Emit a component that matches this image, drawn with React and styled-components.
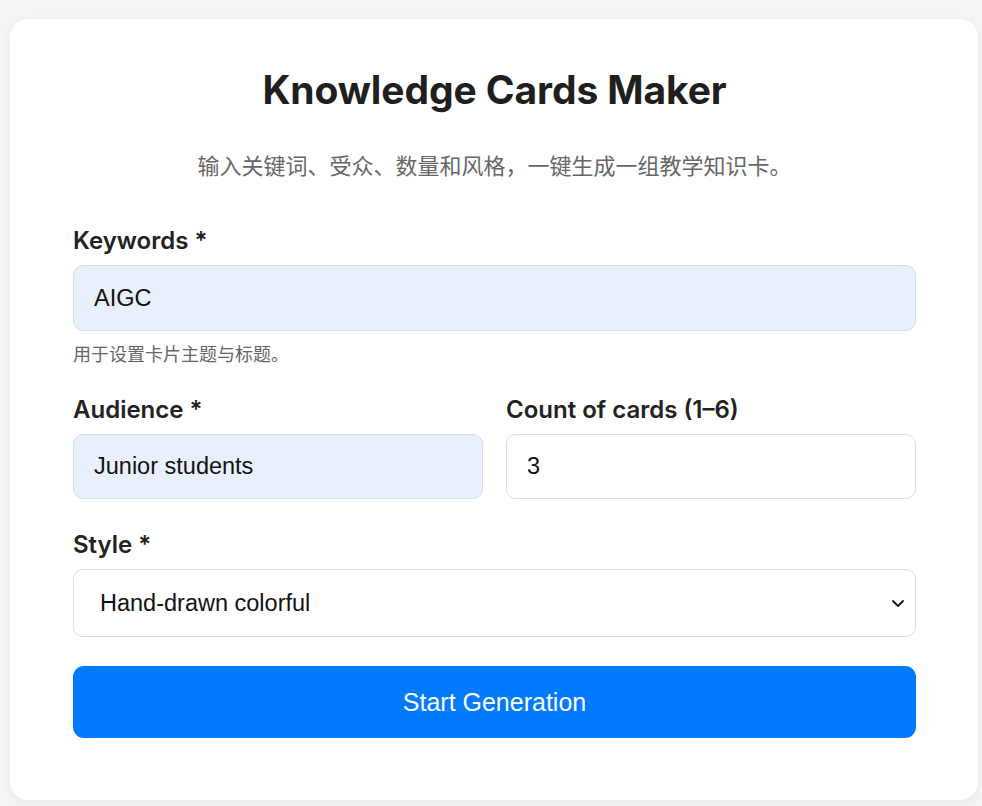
import React, { useState } from 'react';
import styled, { createGlobalStyle } from 'styled-components';

const GlobalStyle = createGlobalStyle`
  html, body {
    margin: 0;
    padding: 0;
    background: #f3f4f6;
  }
  * {
    box-sizing: border-box;
  }
`;

const Page = styled.div`
  min-height: 806px;
  padding: 19px 4px 6px 10px;
`;

const Card = styled.div`
  background: #fff;
  border-radius: 18px;
  box-shadow: 0 2px 10px rgba(0, 0, 0, 0.05);
  padding: 48px 62px 62px 63px;
  font-family: Inter, "Noto Sans CJK SC", sans-serif;
  color: #222;
`;

const Title = styled.h1`
  margin: 0;
  text-align: center;
  font-size: 39px;
  line-height: 46px;
  font-weight: 700;
  color: #1f1f1f;
  letter-spacing: -0.1px;
`;

const Subtitle = styled.p`
  margin: 37px 0 49px;
  text-align: center;
  font-size: 22px;
  line-height: 28px;
  color: #666;
  font-family: "Noto Sans CJK SC", sans-serif;
`;

const Form = styled.form`
  display: flex;
  flex-direction: column;
  gap: 32px;
`;

const Row = styled.div`
  display: grid;
  grid-template-columns: 1fr 1fr;
  gap: 23px;
`;

const Field = styled.div`
  display: flex;
  flex-direction: column;
`;

const Label = styled.label`
  font-size: 24px;
  line-height: 28px;
  font-weight: 600;
  color: #222;
  margin-bottom: 10px;
`;

const Input = styled.input`
  width: 100%;
  height: ${(p) => p.$h || 66}px;
  padding: 0 20px;
  border-radius: 10px;
  border: 1px solid ${(p) => (p.$filled ? '#d6dde8' : '#dcdcdc')};
  background: ${(p) => (p.$filled ? '#e8f0fe' : '#fff')};
  font-family: "Liberation Sans", Arial, sans-serif;
  font-size: 23.5px;
  color: #111;
  outline: none;
`;

const Help = styled.div`
  margin-top: 11px;
  font-size: 18px;
  line-height: 22px;
  color: #666;
  font-family: "Noto Sans CJK SC", sans-serif;
`;

const SelectWrap = styled.div`
  position: relative;
`;

const Select = styled.select`
  width: 100%;
  height: 68px;
  padding: 0 48px 0 26px;
  border-radius: 10px;
  border: 1px solid #dcdcdc;
  background: #fff;
  font-family: "Liberation Sans", Arial, sans-serif;
  font-size: 23.5px;
  color: #111;
  appearance: none;
  outline: none;
`;

const Chevron = styled.svg`
  position: absolute;
  right: 6px;
  top: 50%;
  transform: translateY(-50%);
  pointer-events: none;
`;

const Button = styled.button`
  margin-top: -3px;
  width: 100%;
  height: 72px;
  border: none;
  border-radius: 11px;
  background: #007bff;
  color: #fff;
  font-family: "Liberation Sans", Arial, sans-serif;
  font-size: 25px;
  cursor: pointer;
`;

export default function App() {
  const [keywords, setKeywords] = useState('AIGC');
  const [audience, setAudience] = useState('Junior students');
  const [count, setCount] = useState('3');
  const [style, setStyle] = useState('hand-drawn');

  return (
    <>
      <GlobalStyle />
      <Page>
        <Card>
          <Title>Knowledge Cards Maker</Title>
          <Subtitle>输入关键词、受众、数量和风格，一键生成一组教学知识卡。</Subtitle>
          <Form onSubmit={(e) => e.preventDefault()}>
            <Field>
              <Label>Keywords *</Label>
              <Input $filled value={keywords} onChange={(e) => setKeywords(e.target.value)} />
              <Help>用于设置卡片主题与标题。</Help>
            </Field>
            <Row>
              <Field>
                <Label>Audience *</Label>
                <Input $filled $h={65} value={audience} onChange={(e) => setAudience(e.target.value)} />
              </Field>
              <Field>
                <Label>Count of cards (1–6)</Label>
                <Input $h={65} type="text" value={count} onChange={(e) => setCount(e.target.value)} />
              </Field>
            </Row>
            <Field>
              <Label>Style *</Label>
              <SelectWrap>
                <Select value={style} onChange={(e) => setStyle(e.target.value)}>
                  <option value="hand-drawn">Hand-drawn colorful</option>
                  <option value="minimal">Minimal</option>
                  <option value="cartoon">Cartoon</option>
                </Select>
                <Chevron width="24" height="24" viewBox="0 0 24 24" fill="none">
                  <path d="M7 10 L12 15 L17 10" stroke="#111" strokeWidth="1.8" strokeLinecap="round" strokeLinejoin="round" />
                </Chevron>
              </SelectWrap>
            </Field>
            <Button type="submit">Start Generation</Button>
          </Form>
        </Card>
      </Page>
    </>
  );
}
